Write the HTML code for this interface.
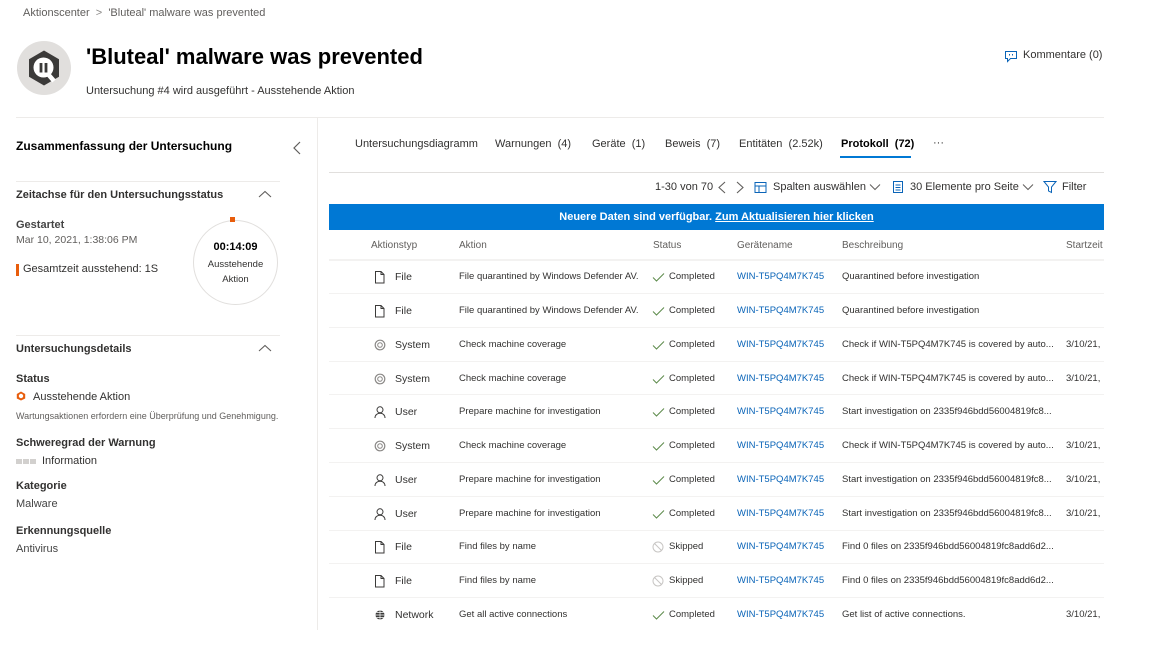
<!DOCTYPE html>
<html><head><meta charset="utf-8"><style>
*{margin:0;padding:0;box-sizing:border-box}
body{width:1154px;height:650px;background:#fff;font-family:"Liberation Sans",sans-serif;color:#323130;position:relative;overflow:hidden}
.a{position:absolute;white-space:nowrap}
.hl{position:absolute;height:1px;background:#edebe9}
.t{font-size:10px;line-height:14px}
.r .t{top:1px;font-size:9.5px}
.r svg{top:2px!important}
.lnk{color:#0a64b8}
.sm{font-size:11px}
</style></head><body>
<div class="a" style="left:23px;top:7px;font-size:11px;color:#605e5c">Aktionscenter &nbsp;<span style="color:#8a8886">&gt;</span>&nbsp; 'Bluteal' malware was prevented</div>

<svg class="a" style="left:16px;top:40px" width="56" height="56" viewBox="0 0 56 56">
<circle cx="28" cy="28" r="27" fill="#e1dfdd"/>
<path d="M28 10.5 L43 19.2 L43 36.8 L28 45.5 L13 36.8 L13 19.2 Z" fill="#3b3a39"/>
<path d="M31 33 L38 41" stroke="#fff" stroke-width="4.5"/>
<circle cx="27.5" cy="27.5" r="10" fill="#fff"/>
<rect x="23.6" y="23" width="2.8" height="9.5" fill="#3b3a39"/><rect x="28.6" y="23" width="2.8" height="9.5" fill="#3b3a39"/>
</svg>
<div class="a" style="left:86px;top:44px;font-size:22px;font-weight:bold;color:#000">'Bluteal' malware was prevented</div>
<div class="a" style="left:86px;top:85px;font-size:11px">Untersuchung #4 wird ausgeführt - Ausstehende Aktion</div>

<svg class="a" style="left:1004px;top:49px" width="14" height="14" viewBox="0 0 14 14"><path d="M1.5 2.5h11v7h-6l-3 3v-3h-2z" fill="none" stroke="#0a64b8"/><rect x="5" y="5" width="1" height="1.5" fill="#0a64b8"/><rect x="8" y="5" width="1" height="1.5" fill="#0a64b8"/></svg>
<div class="a" style="left:1023px;top:49px;font-size:11px">Kommentare (0)</div>

<div class="hl" style="left:16px;top:117px;width:1088px"></div>
<div class="a" style="left:317px;top:118px;width:1px;height:512px;background:#edebe9"></div>

<div class="a" style="left:16px;top:139px;font-size:12px;font-weight:bold;color:#000">Zusammenfassung der Untersuchung</div>
<svg class="a" style="left:292px;top:141px" width="10" height="14"><path d="M8 1L2 7l6 6" fill="none" stroke="#605e5c" stroke-width="1.2"/></svg>
<div class="hl" style="left:16px;top:181px;width:264px"></div>
<div class="a" style="left:16px;top:189px;font-size:11px;font-weight:bold">Zeitachse für den Untersuchungsstatus</div>
<svg class="a" style="left:258px;top:190px" width="14" height="9"><path d="M1 7l6-5.5 6 5.5" fill="none" stroke="#605e5c" stroke-width="1.1"/></svg>
<div class="a" style="left:16px;top:219px;font-size:11px;font-weight:bold;color:#444">Gestartet</div>
<div class="a" style="left:16px;top:234px;font-size:10.5px;color:#605e5c">Mar 10, 2021, 1:38:06 PM</div>
<div class="a" style="left:16px;top:264px;width:3px;height:12px;background:#e85d0c"></div>
<div class="a" style="left:23px;top:263px;font-size:11px">Gesamtzeit ausstehend: 1S</div>
<div class="a" style="left:193px;top:220px;width:85px;height:85px;border:1.5px solid #e1dfdd;border-radius:50%"></div>
<div class="a" style="left:230px;top:217px;width:5px;height:5px;background:#e85d0c"></div>
<div class="a" style="left:193px;top:241px;width:85px;text-align:center;font-size:11px;font-weight:bold;color:#000">00:14:09</div>
<div class="a" style="left:193px;top:257px;width:85px;text-align:center;font-size:9.5px;line-height:15px;white-space:normal">Ausstehende<br>Aktion</div>
<div class="hl" style="left:16px;top:335px;width:264px"></div>
<div class="a" style="left:16px;top:343px;font-size:11px;font-weight:bold">Untersuchungsdetails</div>
<svg class="a" style="left:258px;top:344px" width="14" height="9"><path d="M1 7l6-5.5 6 5.5" fill="none" stroke="#605e5c" stroke-width="1.1"/></svg>
<div class="a" style="left:16px;top:373px;font-size:11px;font-weight:bold">Status</div>
<svg class="a" style="left:16px;top:391px" width="10" height="10" viewBox="0 0 10 10"><path d="M5 0.5L9.2 3v4.5L5 9.5 0.8 7.5V3z" fill="#e85d0c"/><circle cx="5" cy="5" r="2.2" fill="#fff"/></svg>
<div class="a" style="left:33px;top:391px;font-size:11px">Ausstehende Aktion</div>
<div class="a" style="left:16px;top:411px;font-size:9px;color:#605e5c">Wartungsaktionen erfordern eine Überprüfung und Genehmigung.</div>
<div class="a" style="left:16px;top:437px;font-size:11px;font-weight:bold">Schweregrad der Warnung</div>
<div class="a" style="left:16px;top:459px;width:6px;height:5px;background:#d2d0ce"></div>
<div class="a" style="left:23px;top:459px;width:6px;height:5px;background:#d2d0ce"></div>
<div class="a" style="left:30px;top:459px;width:6px;height:5px;background:#d2d0ce"></div>
<div class="a" style="left:42px;top:455px;font-size:11px">Information</div>
<div class="a" style="left:16px;top:480px;font-size:11px;font-weight:bold">Kategorie</div>
<div class="a" style="left:16px;top:498px;font-size:11px;color:#444">Malware</div>
<div class="a" style="left:16px;top:525px;font-size:11px;font-weight:bold">Erkennungsquelle</div>
<div class="a" style="left:16px;top:543px;font-size:11px;color:#444">Antivirus</div>

<div class="a sm" style="left:355px;top:138px">Untersuchungsdiagramm</div>
<div class="a sm" style="left:495px;top:138px">Warnungen&nbsp; (4)</div>
<div class="a sm" style="left:592px;top:138px">Geräte&nbsp; (1)</div>
<div class="a sm" style="left:665px;top:138px">Beweis&nbsp; (7)</div>
<div class="a sm" style="left:739px;top:138px">Entitäten&nbsp; (2.52k)</div>
<div class="a sm" style="left:841px;top:138px;font-weight:bold;color:#000">Protokoll&nbsp; (72)</div>
<div class="a" style="left:840px;top:156px;width:71px;height:2px;background:#0078d4"></div>
<div class="a sm" style="left:933px;top:137px">···</div>
<div class="hl" style="left:329px;top:172px;width:775px;background:#e1dfdd"></div>

<div class="a sm" style="left:655px;top:181px">1-30 von 70</div>
<svg class="a" style="left:716px;top:181px" width="30" height="13"><path d="M9 1L3 6.5 9 12M21 1l6 5.5-6 5.5" fill="none" stroke="#605e5c" stroke-width="1.1"/></svg>
<svg class="a" style="left:754px;top:181px" width="14" height="13"><rect x="1" y="1.5" width="11" height="10" fill="none" stroke="#0a64b8"/><path d="M1 5h11M5 5v6.5" stroke="#0a64b8"/></svg>
<div class="a sm" style="left:773px;top:181px">Spalten auswählen</div>
<svg class="a" style="left:869px;top:183px" width="12" height="8"><path d="M1 1.5l5 5 5-5" fill="none" stroke="#605e5c"/></svg>
<svg class="a" style="left:892px;top:180px" width="12" height="14"><rect x="1.5" y="1.5" width="9" height="11" fill="none" stroke="#0a64b8"/><path d="M3.5 5h5M3.5 7.5h5M3.5 10h5" stroke="#0a64b8"/></svg>
<div class="a sm" style="left:910px;top:181px">30 Elemente pro Seite</div>
<svg class="a" style="left:1022px;top:183px" width="12" height="8"><path d="M1 1.5l5 5 5-5" fill="none" stroke="#605e5c"/></svg>
<svg class="a" style="left:1043px;top:180px" width="14" height="14"><path d="M1 1.5h12L8.5 7v5.5l-3-1.5V7z" fill="none" stroke="#0a64b8"/></svg>
<div class="a sm" style="left:1062px;top:181px">Filter</div>

<div class="a" style="left:329px;top:204px;width:775px;height:26px;background:#0078d4;color:#fff;font-size:11px;font-weight:bold;text-align:center;line-height:26px">Neuere Daten sind verfügbar. <u>Zum Aktualisieren hier klicken</u></div>

<div class="a t" style="left:371px;top:239px;color:#605e5c">Aktionstyp</div>
<div class="a t" style="left:459px;top:239px;color:#605e5c">Aktion</div>
<div class="a t" style="left:653px;top:239px;color:#605e5c">Status</div>
<div class="a t" style="left:737px;top:239px;color:#605e5c">Gerätename</div>
<div class="a t" style="left:842px;top:239px;color:#605e5c">Beschreibung</div>
<div class="a t" style="left:1066px;top:239px;color:#605e5c;width:38px;overflow:hidden">Startzeit d</div>
<div class="hl" style="left:329px;top:259px;width:775px;background:#f3f2f1;height:2px"></div>

<svg width="0" height="0" style="position:absolute"><defs>
<g id="file"><path d="M1.5 0.5h5.5l3 3v8.5h-8.5z" fill="none" stroke="#3b3a39"/><path d="M7 0.5v3h3" fill="none" stroke="#3b3a39"/></g>
<g id="sys"><circle cx="6" cy="6" r="4.8" fill="none" stroke="#8a8886" stroke-width="1.2"/><circle cx="6" cy="6" r="2.3" fill="none" stroke="#8a8886"/></g>
<g id="user"><circle cx="6" cy="3.8" r="3" fill="none" stroke="#3b3a39"/><path d="M1 12c0-3 2.2-4.8 5-4.8s5 1.8 5 4.8" fill="none" stroke="#3b3a39"/></g>
<g id="net"><circle cx="6" cy="6" r="4.5" fill="#3b3a39"/><path d="M1.5 6h9M6 1.5v9M2.5 3.5h7M2.5 8.5h7" stroke="#fff" stroke-width=".7"/></g>
<g id="ok"><path d="M1 6.5l3.5 3.5L12 2.5" fill="none" stroke="#5c8a4a"/></g>
<g id="skip"><circle cx="6" cy="6" r="5" fill="none" stroke="#c8c6c4"/><path d="M2.5 2.5l7 7" stroke="#c8c6c4"/></g>
</defs></svg>

<div class="a r" style="left:0;top:269px;width:1154px;height:16px">
<svg class="a" style="left:374px;top:1px" width="12" height="13"><use href="#file"/></svg><div class="a t" style="left:395px;font-size:10.5px">File</div><div class="a t" style="left:459px">File quarantined by Windows Defender AV.</div><svg class="a" style="left:652px;top:1px" width="13" height="12"><use href="#ok"/></svg><div class="a t" style="left:669px">Completed</div><div class="a t lnk" style="left:737px">WIN-T5PQ4M7K745</div><div class="a t" style="left:842px">Quarantined before investigation</div></div>
<div class="hl" style="left:329px;top:293px;width:775px;background:#f3f2f1"></div>
<div class="a r" style="left:0;top:303px;width:1154px;height:16px">
<svg class="a" style="left:374px;top:1px" width="12" height="13"><use href="#file"/></svg><div class="a t" style="left:395px;font-size:10.5px">File</div><div class="a t" style="left:459px">File quarantined by Windows Defender AV.</div><svg class="a" style="left:652px;top:1px" width="13" height="12"><use href="#ok"/></svg><div class="a t" style="left:669px">Completed</div><div class="a t lnk" style="left:737px">WIN-T5PQ4M7K745</div><div class="a t" style="left:842px">Quarantined before investigation</div></div>
<div class="hl" style="left:329px;top:327px;width:775px;background:#f3f2f1"></div>
<div class="a r" style="left:0;top:337px;width:1154px;height:16px">
<svg class="a" style="left:374px;top:1px" width="12" height="13"><use href="#sys"/></svg><div class="a t" style="left:395px;font-size:10.5px">System</div><div class="a t" style="left:459px">Check machine coverage</div><svg class="a" style="left:652px;top:1px" width="13" height="12"><use href="#ok"/></svg><div class="a t" style="left:669px">Completed</div><div class="a t lnk" style="left:737px">WIN-T5PQ4M7K745</div><div class="a t" style="left:842px">Check if WIN-T5PQ4M7K745 is covered by auto...</div><div class="a t" style="left:1066px">3/10/21,</div></div>
<div class="hl" style="left:329px;top:361px;width:775px;background:#f3f2f1"></div>
<div class="a r" style="left:0;top:371px;width:1154px;height:16px">
<svg class="a" style="left:374px;top:1px" width="12" height="13"><use href="#sys"/></svg><div class="a t" style="left:395px;font-size:10.5px">System</div><div class="a t" style="left:459px">Check machine coverage</div><svg class="a" style="left:652px;top:1px" width="13" height="12"><use href="#ok"/></svg><div class="a t" style="left:669px">Completed</div><div class="a t lnk" style="left:737px">WIN-T5PQ4M7K745</div><div class="a t" style="left:842px">Check if WIN-T5PQ4M7K745 is covered by auto...</div><div class="a t" style="left:1066px">3/10/21,</div></div>
<div class="hl" style="left:329px;top:394px;width:775px;background:#f3f2f1"></div>
<div class="a r" style="left:0;top:404px;width:1154px;height:16px">
<svg class="a" style="left:374px;top:1px" width="12" height="13"><use href="#user"/></svg><div class="a t" style="left:395px;font-size:10.5px">User</div><div class="a t" style="left:459px">Prepare machine for investigation</div><svg class="a" style="left:652px;top:1px" width="13" height="12"><use href="#ok"/></svg><div class="a t" style="left:669px">Completed</div><div class="a t lnk" style="left:737px">WIN-T5PQ4M7K745</div><div class="a t" style="left:842px">Start investigation on 2335f946bdd56004819fc8...</div></div>
<div class="hl" style="left:329px;top:428px;width:775px;background:#f3f2f1"></div>
<div class="a r" style="left:0;top:438px;width:1154px;height:16px">
<svg class="a" style="left:374px;top:1px" width="12" height="13"><use href="#sys"/></svg><div class="a t" style="left:395px;font-size:10.5px">System</div><div class="a t" style="left:459px">Check machine coverage</div><svg class="a" style="left:652px;top:1px" width="13" height="12"><use href="#ok"/></svg><div class="a t" style="left:669px">Completed</div><div class="a t lnk" style="left:737px">WIN-T5PQ4M7K745</div><div class="a t" style="left:842px">Check if WIN-T5PQ4M7K745 is covered by auto...</div><div class="a t" style="left:1066px">3/10/21,</div></div>
<div class="hl" style="left:329px;top:462px;width:775px;background:#f3f2f1"></div>
<div class="a r" style="left:0;top:472px;width:1154px;height:16px">
<svg class="a" style="left:374px;top:1px" width="12" height="13"><use href="#user"/></svg><div class="a t" style="left:395px;font-size:10.5px">User</div><div class="a t" style="left:459px">Prepare machine for investigation</div><svg class="a" style="left:652px;top:1px" width="13" height="12"><use href="#ok"/></svg><div class="a t" style="left:669px">Completed</div><div class="a t lnk" style="left:737px">WIN-T5PQ4M7K745</div><div class="a t" style="left:842px">Start investigation on 2335f946bdd56004819fc8...</div><div class="a t" style="left:1066px">3/10/21,</div></div>
<div class="hl" style="left:329px;top:496px;width:775px;background:#f3f2f1"></div>
<div class="a r" style="left:0;top:506px;width:1154px;height:16px">
<svg class="a" style="left:374px;top:1px" width="12" height="13"><use href="#user"/></svg><div class="a t" style="left:395px;font-size:10.5px">User</div><div class="a t" style="left:459px">Prepare machine for investigation</div><svg class="a" style="left:652px;top:1px" width="13" height="12"><use href="#ok"/></svg><div class="a t" style="left:669px">Completed</div><div class="a t lnk" style="left:737px">WIN-T5PQ4M7K745</div><div class="a t" style="left:842px">Start investigation on 2335f946bdd56004819fc8...</div><div class="a t" style="left:1066px">3/10/21,</div></div>
<div class="hl" style="left:329px;top:530px;width:775px;background:#f3f2f1"></div>
<div class="a r" style="left:0;top:539px;width:1154px;height:16px">
<svg class="a" style="left:374px;top:1px" width="12" height="13"><use href="#file"/></svg><div class="a t" style="left:395px;font-size:10.5px">File</div><div class="a t" style="left:459px">Find files by name</div><svg class="a" style="left:652px;top:1px" width="13" height="12"><use href="#skip"/></svg><div class="a t" style="left:669px">Skipped</div><div class="a t lnk" style="left:737px">WIN-T5PQ4M7K745</div><div class="a t" style="left:842px">Find 0 files on 2335f946bdd56004819fc8add6d2...</div></div>
<div class="hl" style="left:329px;top:563px;width:775px;background:#f3f2f1"></div>
<div class="a r" style="left:0;top:573px;width:1154px;height:16px">
<svg class="a" style="left:374px;top:1px" width="12" height="13"><use href="#file"/></svg><div class="a t" style="left:395px;font-size:10.5px">File</div><div class="a t" style="left:459px">Find files by name</div><svg class="a" style="left:652px;top:1px" width="13" height="12"><use href="#skip"/></svg><div class="a t" style="left:669px">Skipped</div><div class="a t lnk" style="left:737px">WIN-T5PQ4M7K745</div><div class="a t" style="left:842px">Find 0 files on 2335f946bdd56004819fc8add6d2...</div></div>
<div class="hl" style="left:329px;top:597px;width:775px;background:#f3f2f1"></div>
<div class="a r" style="left:0;top:607px;width:1154px;height:16px">
<svg class="a" style="left:374px;top:1px" width="12" height="13"><use href="#net"/></svg><div class="a t" style="left:395px;font-size:10.5px">Network</div><div class="a t" style="left:459px">Get all active connections</div><svg class="a" style="left:652px;top:1px" width="13" height="12"><use href="#ok"/></svg><div class="a t" style="left:669px">Completed</div><div class="a t lnk" style="left:737px">WIN-T5PQ4M7K745</div><div class="a t" style="left:842px">Get list of active connections.</div><div class="a t" style="left:1066px">3/10/21,</div></div>
</body></html>
